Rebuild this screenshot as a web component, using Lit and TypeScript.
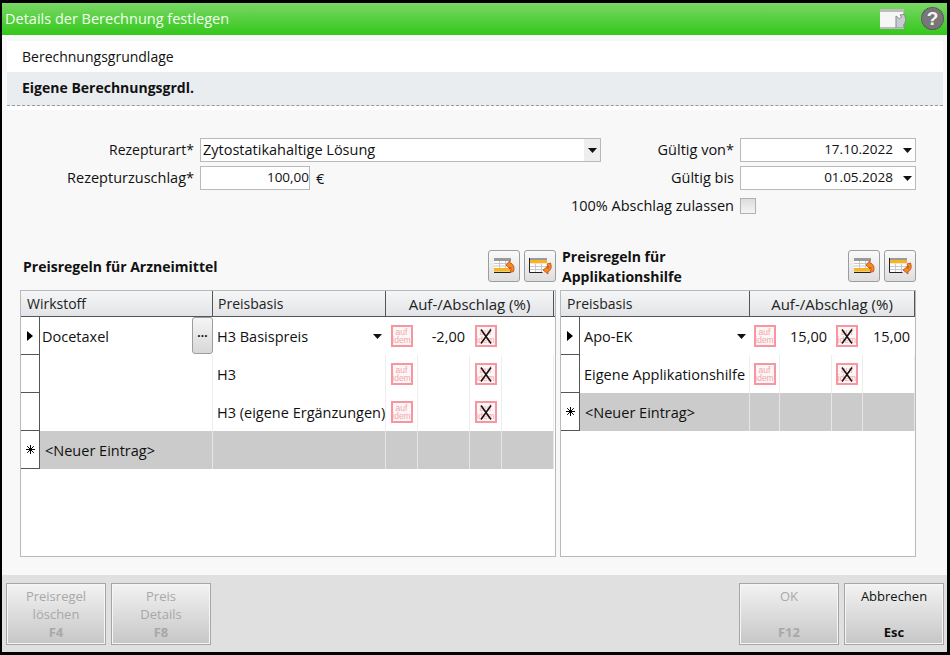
import { LitElement, html, css, svg } from "lit";
import { customElement } from "lit/decorators.js";

const caret = html`<svg class="caret" width="9" height="5" viewBox="0 0 9 5"><path d="M0 0h9L4.5 5z" fill="#111"/></svg>`;

const idem = (x = false) => html`<span class="idem">
  <span class="idem-t">auf<br />idem</span>
  ${x ? html`<svg class="idem-x" width="12" height="15" viewBox="0 0 12 15"><path d="M1 .5l10 14M11 .5L1 14.5" stroke="#111" stroke-width="1.5" fill="none"/></svg>` : ""}
</span>`;

const tblIcon = (dir: "back" | "fwd") => html`<svg width="24" height="20" viewBox="0 0 24 20">
  ${dir === "back"
    ? svg`<rect x="2" y="2" width="17" height="3" fill="#9a9a9a"/>
      <rect x="2" y="5" width="17" height="7" fill="#fff"/>
      <path d="M2 7.500h17M2 10h17M7.500 5v7M13.500 5v7" stroke="#c9c9c9" fill="none"/>
      <rect x="2" y="12" width="17" height="3.500" fill="#f7b526"/>
      <path d="M2 16.500h17" stroke="#222" fill="none"/>
      <path d="M14 9l4-4.500V7c3 .5 5 4 3.500 8.500L18 16.500c1.500-3 1.500-5 0-5.500v2z" fill="#f28a1c" stroke="#c0431a" stroke-width=".8"/>`
    : svg`<rect x="2" y="2" width="17" height="2" fill="#9a9a9a"/>
      <rect x="2" y="4" width="17" height="3.500" fill="#f7b526"/>
      <rect x="2" y="7.500" width="17" height="8.500" fill="#fff"/>
      <path d="M2 10.500h17M2 13.500h17M7.500 7.500v8.500M13.500 7.500v8.500" stroke="#c9c9c9" fill="none"/>
      <path d="M1.500 2v14.500h13" stroke="#222" fill="none"/>
      <path d="M15 14l5 4v-2.500c3-1 4-4.500 2.500-8.500L19 8c1 2 1.200 3.500 1 4.500V10z" fill="#f28a1c" stroke="#c0431a" stroke-width=".8"/>`}
</svg>`;

type Row = { ind: string; first?: any; basis?: string; combo?: boolean; a?: boolean; val?: string; x?: boolean; last?: string; neu?: boolean; cur?: boolean };

@customElement("app-root")
export class AppRoot extends LitElement {
  static styles = css`
    :host { display: block; width: 950px; height: 655px; box-sizing: border-box; font-family: "Open Sans", "Noto Sans", sans-serif; font-size: 14.5px; color: #111; background: #f8f8f8; border: solid #000; border-width: 3px 3px 3px 2px; overflow: hidden; }
    .win { display: flex; flex-direction: column; height: 649px; }
    .title { height: 32px; flex: none; display: flex; align-items: center; padding: 0 3px 0 3px; background: linear-gradient(#7ad765, #33c71b); color: #f2fff0; font-size: 14.5px; }
    .title .t { flex: 1; padding-bottom: 2px; }
    .detach { display: block; margin-right: 14px; }
    .help { box-sizing: border-box; width: 23px; height: 23px; margin-top: -1px; border-radius: 50%; border: 1px dotted #444; background: #777; color: #f4f4f4; font: bold 19px "Liberation Sans", sans-serif; display: flex; align-items: center; justify-content: center; }
    .body { flex: 1; padding: 6px 4px 0 5px; display: flex; flex-direction: column; min-height: 0; }
    .head { background: #fff; height: 69px; flex: none; font-size: 14px; }
    .head .a { height: 31px; display: flex; align-items: center; padding-left: 15px; }
    .head .b { height: 33px; box-sizing: content-box; display: flex; align-items: center; padding: 0 0 0 15px; background: #e9edf0; font-weight: 700; border-bottom: 1px dashed #999; }
    .head .b span { margin-top: -3px; }
    .form { display: grid; grid-template-columns: 187px 401px 127px 176px; grid-template-rows: 24px 24px 24px; gap: 4px 6px; margin: 28px 0 0 0; align-items: center; flex: none; }
    .form .l { text-align: right; white-space: nowrap; margin-top: -2px; }
    .form .l.sm { font-size: 14px; }
    .form .wide { grid-column: 2 / span 2; }
    .input { box-sizing: border-box; height: 24px; background: #fff; border: 1px solid #b9b9b9; display: flex; align-items: center; padding: 0 3px 0 2px; }
    .input .txt { flex: 1; margin-top: -2px; }
    .input.r { font-size: 13.5px; }
    .input.r .txt { text-align: right; padding-right: 10px; }
    .drop { align-self: stretch; width: 16px; margin-right: -3px; background: #eee; display: flex; align-items: center; justify-content: center; }
    .num { width: 110px; justify-content: flex-end; padding-right: 0; font-size: 13.5px; }
    .num .txt { text-align: right; }
    .euro { display: flex; gap: 6px; align-items: center; }
    .check { box-sizing: border-box; width: 16px; height: 16px; border: 1px solid #b0b0b0; background: linear-gradient(#dcdcdc, #f4f4f4); }
    .tables { display: flex; gap: 4px; margin: 24px 0 0 13px; flex: none; }
    .side { display: flex; flex-direction: column; }
    .side.left { width: 536px; }
    .side.right { width: 356px; }
    .bar { display: flex; align-items: center; height: 48px; gap: 4px; }
    .bar h2 { margin: 0; flex: 1; font-size: 14px; font-weight: 700; line-height: 20px; padding: 2px 0 0 2px; }
    .left .bar h2 { padding-left: 3px; }
    .tb { box-sizing: border-box; width: 32px; height: 32px; border: 1px solid #9d9d9d; border-radius: 3px; background: linear-gradient(#fafafa, #dedede); display: flex; align-items: center; justify-content: center; padding: 0; }
    .grid { box-sizing: border-box; height: 267px; background: #fff; border: 1px solid #b9b9b9; }
    .hdr, .row { display: grid; }
    .left .hdr, .left .row { grid-template-columns: 19px 173px 173px 32px 52px 32px 52px; }
    .right .hdr, .right .row { grid-template-columns: 19px 170px 30px 52px 31px 52px; }
    .hdr { height: 25px; border-bottom: 1px solid #555; box-sizing: content-box; background: linear-gradient(#f5f6f7, #e2e4e7); }
    .hc { display: flex; align-items: center; padding-left: 5px; border-right: 1px solid #555; color: #222; font-size: 14px; }
    .hc.c { justify-content: center; padding-left: 0; font-size: 15px; }
    .hc.w { padding-left: 6px; grid-column: span 2; }
    .hc.c { grid-column: span 4; }
    .row { height: 38px; }
    .ind { box-sizing: border-box; border-right: 1px solid #555; border-bottom: 1px solid #555; background: #fff; display: flex; align-items: center; justify-content: center; }
    .ce { display: flex; align-items: center; min-width: 0; white-space: nowrap; padding-left: 4px; border-right: 1px solid #eee; position: relative; }
    .row.cur .ce { border-right-color: transparent; }
    .ce.doc { padding-left: 2px; }
    .ce.val { justify-content: flex-end; padding: 0 4px 0 0; }
    .ce.mid { justify-content: center; padding: 0; }
    .ce .sp { flex: 1; }
    .ce .caret { margin-right: 3px; }
    .row.neu .ce { background: #cbcbcb; border-right-color: #e6e6e6; }
    .row.neu .t { padding-left: 1px; }
    .dots { box-sizing: border-box; position: absolute; right: -1px; top: 0; width: 21px; height: 37px; border: 1px solid #9d9d9d; border-radius: 3px; background: linear-gradient(#f5f5f5, #d8d8d8); font: bold 12px "Liberation Sans", sans-serif; letter-spacing: -.5px; display: flex; align-items: center; justify-content: center; }
    .idem { position: relative; box-sizing: border-box; width: 22px; height: 22px; border: 2px solid #f8959f; background: #fbf7f7; color: #f7a3aa; font: 8.5px/8.5px "Liberation Sans", sans-serif; display: flex; align-items: center; justify-content: center; text-align: center; }
    .idem-x { position: absolute; left: 3px; top: 2px; }
    .foot { flex: none; height: 77px; background: #e0e0e0; margin: auto -4px 0 -5px; padding: 8px 3px 0 4px; display: flex; gap: 5px; box-sizing: border-box; }
    .foot .gap { flex: 1; }
    .fb { box-sizing: border-box; width: 100px; height: 62px; border: 1px solid #a6a6a6; background: linear-gradient(#f3f3f3, #c6c6c6); box-shadow: inset 0 0 0 1px #f6f6f6; display: grid; grid-template-rows: 18px 18px 18px; padding-top: 3px; text-align: center; color: #a8a8a8; line-height: 18px; font-size: 13px; }
    .fb b { font-weight: 700; }
    .fb.on { color: #111; }
  `;

  private renderRow(r: Row) {
    return html`<div class="row ${r.neu ? "neu" : ""} ${r.cur ? "cur" : ""}">
      <span class="ind">${r.ind === ">" ? html`<svg width="6" height="10" viewBox="0 0 6 10"><path d="M0 0l6 5-6 5z" fill="#000"/></svg>` : r.ind === "*" ? html`<svg width="9" height="9" viewBox="0 0 9 9"><path d="M4.500 0v9M0 4.500h9M1.200 1.200l6.600 6.600M7.800 1.200L1.200 7.800" stroke="#000"/></svg>` : ""}</span>
      ${r.first !== undefined ? r.first : ""}
      <span class="ce">${r.neu && r.first === undefined ? html`<span class="t">${r.basis}</span>` : r.basis}${r.combo ? html`<span class="sp"></span>${caret}` : ""}</span>
      <span class="ce mid">${r.a ? idem() : ""}</span>
      <span class="ce val">${r.val ?? ""}</span>
      <span class="ce mid">${r.x ? idem(true) : ""}</span>
      <span class="ce val">${r.last ?? ""}</span>
    </div>`;
  }

  private rows(title: any, left: boolean, rows: Row[]) {
    return html`<section class="side ${left ? "left" : "right"}">
      <div class="bar">
        <h2>${title}</h2>
        <button class="tb">${tblIcon("back")}</button>
        <button class="tb">${tblIcon("fwd")}</button>
      </div>
      <div class="grid">
        <div class="hdr">
          ${left
            ? html`<span class="hc w">Wirkstoff</span><span class="hc">Preisbasis</span><span class="hc c">Auf-/Abschlag (%)</span>`
            : html`<span class="hc w">Preisbasis</span><span class="hc c">Auf-/Abschlag (%)</span>`}
        </div>
        ${rows.map((r) => this.renderRow(r))}
      </div>
    </section>`;
  }

  render() {
    const first = (t: string, btn = false) => html`<span class="ce doc">${t}${btn ? html`<span class="dots">···</span>` : ""}</span>`;
    const neuFirst = html`<span class="ce"><span class="t">&lt;Neuer Eintrag&gt;</span></span>`;
    return html`<div class="win">
      <header class="title">
        <span class="t">Details der Berechnung festlegen</span>
        <svg class="detach" width="27" height="20" viewBox="0 0 27 20">
          <rect x="0" y="0" width="24" height="20" fill="#f6f6f6"/>
          <path d="M0 0h24v3H0zM0 18h16v2H0zM23 3h1v4h-1z" fill="#bdbdbd"/>
          <path d="M16 19V7l3.500 3 2-2-1.500-2 4-.5c2 3 2.500 7-.5 10.500l1 3z" fill="#c7ccd0" stroke="#858b90"/>
        </svg>
        <span class="help">?</span>
      </header>
      <div class="body">
        <div class="head">
          <div class="a">Berechnungsgrundlage</div>
          <div class="b"><span>Eigene Berechnungsgrdl.</span></div>
        </div>
        <div class="form">
          <span class="l sm">Rezepturart*</span>
          <div class="input"><span class="txt">Zytostatikahaltige Lösung</span><span class="drop">${caret}</span></div>
          <span class="l">Gültig von*</span>
          <div class="input r"><span class="txt">17.10.2022</span>${caret}</div>
          <span class="l">Rezepturzuschlag*</span>
          <div class="euro"><div class="input num"><span class="txt">100,00</span></div>€</div>
          <span class="l">Gültig bis</span>
          <div class="input r"><span class="txt">01.05.2028</span>${caret}</div>
          <span></span>
          <span class="l wide">100% Abschlag zulassen</span>
          <span class="check"></span>
        </div>
        <div class="tables">
          ${this.rows("Preisregeln für Arzneimittel", true, [
            { ind: ">", cur: true, first: first("Docetaxel", true), basis: "H3 Basispreis", combo: true, a: true, val: "-2,00", x: true },
            { ind: "", first: first(""), basis: "H3", a: true, x: true },
            { ind: "", first: first(""), basis: "H3 (eigene Ergänzungen)", a: true, x: true },
            { ind: "*", first: neuFirst, basis: "", neu: true },
          ])}
          ${this.rows(html`Preisregeln für<br />Applikationshilfe`, false, [
            { ind: ">", cur: true, basis: "Apo-EK", combo: true, a: true, val: "15,00", x: true, last: "15,00" },
            { ind: "", basis: "Eigene Applikationshilfe", a: true, x: true },
            { ind: "*", basis: "<Neuer Eintrag>", neu: true },
          ])}
        </div>
        <footer class="foot">
          <div class="fb"><span>Preisregel</span><span>löschen</span><b>F4</b></div>
          <div class="fb"><span>Preis</span><span>Details</span><b>F8</b></div>
          <span class="gap"></span>
          <div class="fb"><span>OK</span><span></span><b>F12</b></div>
          <div class="fb on"><span>Abbrechen</span><span></span><b>Esc</b></div>
        </footer>
      </div>
    </div>`;
  }
}
